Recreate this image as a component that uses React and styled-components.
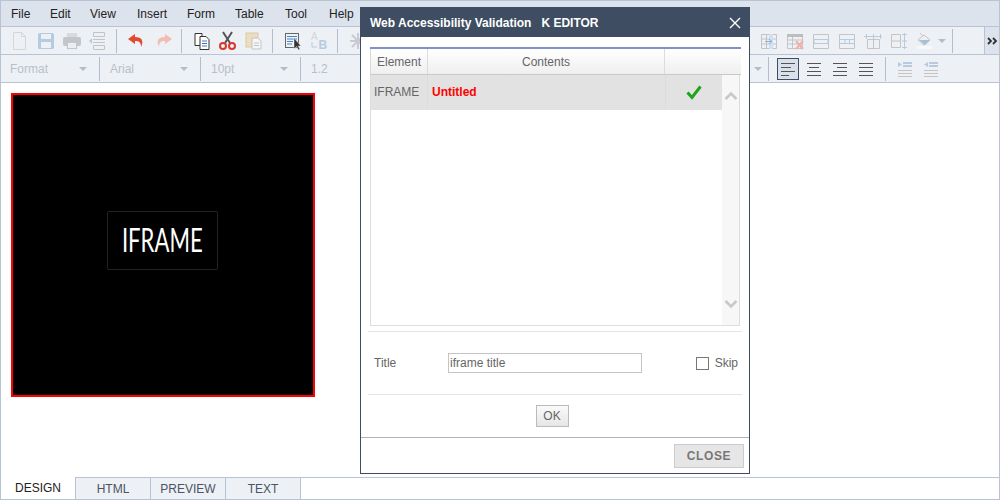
import React from "react";
import styled, { createGlobalStyle } from "styled-components";

const GlobalStyle = createGlobalStyle`
  html, body { margin: 0; padding: 0; background: #fff; }
  body { font-family: "Liberation Sans", Arial, sans-serif; font-size: 12px; }
  * { box-sizing: border-box; }
`;

const Editor = styled.div`
  position: relative;
  width: 1000px;
  height: 500px;
  display: flex;
  flex-direction: column;
  border: 1px solid #b8c3d4;
  overflow: hidden;
`;

const MenuBar = styled.div`
  height: 26px;
  flex: none;
  display: flex;
  align-items: center;
  padding-left: 10px;
  background: #dce3ec;
  border-bottom: 1px solid #b8c3d4;
  color: #222;
`;

const MenuItem = styled.span`
  width: ${(p) => p.$w}px;
`;

const ToolRow = styled.div`
  height: 28px;
  flex: none;
  display: flex;
  align-items: center;
  justify-content: space-between;
  background: #edf0f5;
  border-bottom: 1px solid #b8c3d4;
`;

const ToolGroup = styled.div`
  display: flex;
  align-items: center;
  height: 100%;
  padding-left: ${(p) => p.$pad || 0}px;
`;

const Sep = styled.span`
  width: 1px;
  height: 24px;
  flex: none;
  background: #b4bdcb;
  margin: 0 ${(p) => p.$r ?? 7}px 0 ${(p) => p.$l ?? 5}px;
`;

const IconBtn = styled.span`
  width: 26px;
  height: 22px;
  display: flex;
  align-items: center;
  justify-content: center;
  flex: none;
  ${(p) => p.$active && "background: #d8e0ea; border: 1px solid #3e4d61; width: 22px; margin-right: 2px;"}
`;

const MoreTab = styled.div`
  width: 15px;
  height: 100%;
  display: flex;
  align-items: center;
  justify-content: center;
  background: #dce3ec;
  border-left: 1px solid #b8c3d4;
  margin-left: 25px;
`;

const RowEnd = styled.span`
  width: 55px;
`;

const Select = styled.div`
  width: ${(p) => p.$w}px;
  display: flex;
  align-items: center;
  justify-content: space-between;
  color: #b9bfc8;
  padding-right: 2px;
`;

const Caret = styled.span`
  width: 0;
  height: 0;
  border-left: 4px solid transparent;
  border-right: 4px solid transparent;
  border-top: 4px solid #b4bcc8;
  flex: none;
`;

const Canvas = styled.div`
  flex: 1;
  padding: 10px;
  background: #fff;
`;

const FramePlaceholder = styled.div`
  width: 304px;
  height: 304px;
  padding-bottom: 9px;
  background: #000;
  border: 2px solid #f00;
  display: flex;
  align-items: center;
  justify-content: center;
`;

const FrameLabel = styled.div`
  width: 111px;
  height: 59px;
  margin-right: 1px;
  padding-bottom: 3px;
  border: 1px solid #222;
  border-radius: 2px;
  display: flex;
  align-items: center;
  justify-content: center;
  color: #fff;
  font: 400 33px Lato, sans-serif;
`;

const LabelText = styled.span`
  display: inline-block;
  transform: scaleX(0.67);
`;

const TabBar = styled.div`
  height: 22px;
  flex: none;
  display: flex;
  background: #fff;
`;

const Tab = styled.div`
  width: 75px;
  display: flex;
  align-items: center;
  justify-content: center;
  background: ${(p) => (p.$active ? "#fff" : "#edf0f5")};
  color: ${(p) => (p.$active ? "#222" : "#4a5462")};
  border-right: 1px solid #b8c3d4;
  border-top: ${(p) => (p.$active ? "0" : "1px solid #b8c3d4")};
`;

const TabFill = styled.div`
  flex: 1;
  border-top: 1px solid #b8c3d4;
`;

const Dialog = styled.div`
  position: absolute;
  left: 359px;
  top: 6px;
  width: 390px;
  height: 467px;
  background: #fff;
  border: 1px solid #3e4d61;
  display: flex;
  flex-direction: column;
  color: #666;
`;

const DialogHead = styled.div`
  height: 29px;
  flex: none;
  background: #3e4d61;
  color: #fff;
  font-weight: bold;
  display: flex;
  align-items: center;
  justify-content: space-between;
  padding: 1px 8px 0 9px;
`;

const HeadTitle = styled.span`
  white-space: pre;
`;

const DialogBody = styled.div`
  flex: 1;
  padding: 10px 3px 0 6px;
  display: flex;
  flex-direction: column;
`;

const ValidationTable = styled.div`
  margin-left: 3px;
  width: 371px;
  height: 279px;
  border-top: 2px solid #7f94c4;
  display: flex;
  flex-direction: column;
`;

const TableHead = styled.div`
  height: 26px;
  flex: none;
  display: grid;
  grid-template-columns: 57px 237px 76px;
  background: linear-gradient(#fff, #efefef);
  border-bottom: 1px solid #c9c9c9;
  border-left: 1px solid #d8d8d8;
`;

const HeadCell = styled.div`
  display: flex;
  align-items: center;
  justify-content: center;
  border-right: 1px solid #dcdcdc;
  &:last-child { border-right: 0; }
`;

const TableBody = styled.div`
  flex: 1;
  display: flex;
  width: 370px;
  border: 1px solid #ddd;
  border-top: 0;
`;

const Rows = styled.div`
  flex: 1;
`;

const Row = styled.div`
  height: 35px;
  display: grid;
  grid-template-columns: 57px 238px 56px;
  background: #e2e2e2;
`;

const Cell = styled.div`
  display: flex;
  align-items: center;
  justify-content: ${(p) => (p.$center ? "center" : "flex-start")};
  padding: 0 0 2px ${(p) => (p.$center ? 0 : p.$error ? 4 : 3)}px;
  border-right: 1px solid #dcdcdc;
  color: ${(p) => (p.$error ? "#f00" : "inherit")};
  font-weight: ${(p) => (p.$error ? "bold" : "normal")};
  &:last-child { border-right: 0; }
`;

const Scroller = styled.div`
  width: 17px;
  background: #f7f7f7;
  display: flex;
  flex-direction: column;
  justify-content: space-between;
  align-items: center;
  padding: 16px 0 16px;
`;

const Rule = styled.div`
  height: 1px;
  width: 374px;
  flex: none;
  margin: ${(p) => p.$top || 0}px 0 0 1px;
  background: #e4e4e4;
`;

const FieldRow = styled.div`
  height: 62px;
  display: flex;
  align-items: center;
  padding: 0 8px 0 7px;
`;

const FieldLabel = styled.label`
  width: 74px;
`;

const TextInput = styled.input`
  width: 194px;
  height: 20px;
  border: 1px solid #c4c4c4;
  padding: 0 1px;
  font: 12px "Liberation Sans", sans-serif;
  color: #666;
  outline: 0;
`;

const SkipLabel = styled.label`
  margin-left: auto;
  display: flex;
  align-items: center;
  gap: 6px;
`;

const CheckBox = styled.span`
  width: 13px;
  height: 13px;
  border: 1px solid #777;
  background: #fff;
`;

const OkWrap = styled.div`
  display: flex;
  justify-content: center;
  padding: 10px 9px 0 0;
`;

const OkButton = styled.button`
  width: 33px;
  height: 22px;
  padding: 0;
  border: 1px solid #bbb;
  background: linear-gradient(#fafafa, #e6e6e6);
  color: #666;
  font: 12px "Liberation Sans", sans-serif;
`;

const DialogFoot = styled.div`
  height: 36px;
  flex: none;
  border-top: 1px solid #adb3be;
  display: flex;
  justify-content: flex-end;
  align-items: center;
  padding: 0 5px 0 0;
`;

const CloseButton = styled.button`
  width: 70px;
  height: 24px;
  padding: 0;
  border: 1px solid #ccc;
  background: #e6e6e6;
  color: #777;
  font: bold 12px "Liberation Sans", sans-serif;
  letter-spacing: 0.6px;
`;

const Svg = ({ children, w = 20, h = 20 }) => (
  <svg width={w} height={h} viewBox={`0 0 ${w} ${h}`} fill="none">
    {children}
  </svg>
);

const grey = "#c4c4c4";
const blue = "#b7cbe0";

const icons = {
  doc: <path d="M3.5 1.5h8l4 4v13h-12zM11.5 1.5v4h4" stroke="#d4d6da" />,
  save: (
    <g>
      <rect x="2" y="2" width="16" height="16" rx="1.5" fill={blue} />
      <rect x="5" y="3" width="10" height="5" fill="#edf0f5" />
      <rect x="5" y="11" width="10" height="6" fill="#edf0f5" />
    </g>
  ),
  print: (
    <g>
      <rect x="5" y="2" width="10" height="5" fill="#d8dade" />
      <rect x="1" y="6" width="18" height="9" rx="2" fill="#c2c5ca" />
      <rect x="5.5" y="11.5" width="9" height="6" fill="#eceef2" stroke="#c2c5ca" />
    </g>
  ),
  preview: (
    <g stroke={grey}>
      <path d="M5.5 1.5h11v4h-11zM5.5 14.5h11v4h-11zM5 8.5h12M5 11.5h12" />
      <path d="M1 10l3-3v6z" fill={blue} stroke="none" />
    </g>
  ),
  undo: <path d="M8 3L1 8l7 5v-3c4 0 6 1 6 6 3-6 1-10-6-10z" fill="#e2492f" />,
  redo: <path d="M12 3l7 5-7 5v-3c-4 0-6 1-6 6-3-6-1-10 6-10z" fill="#f1bdb3" />,
  copy: (
    <g stroke="#333">
      <path d="M3 2.5h7v12H3z" fill="#fff" />
      <path d="M8 5.5h6l3 3v10H8z" fill="#fff" />
      <path d="M10 10h5M10 12.5h5M10 15h5" stroke="#3f7cc0" />
    </g>
  ),
  cut: (
    <g>
      <path d="M5 1l7 11M14 1L7 12" stroke="#555" strokeWidth="2" />
      <circle cx="5" cy="15" r="3" stroke="#d9382a" strokeWidth="2" />
      <circle cx="14" cy="15" r="3" stroke="#d9382a" strokeWidth="2" />
    </g>
  ),
  paste: (
    <g>
      <rect x="2" y="2" width="12" height="14" fill="#ecdcc0" stroke="#dcc8a4" />
      <path d="M8 7h6l3 3v8H8z" fill="#f4f5f7" stroke={grey} />
      <path d="M10 12h5M10 14.5h5" stroke={grey} />
    </g>
  ),
  source: (
    <g>
      <rect x="2.5" y="2.5" width="13" height="14" fill="#eef1f5" stroke="#666" />
      <path d="M4 5.5h10M4 8h10M4 10.5h6M4 13h5" stroke="#4a86c5" />
      <path d="M11 7v11l2.5-2.5 2 3.5 1.5-1-2-3h3z" fill="#333" stroke="#eef1f5" strokeWidth="0.5" />
    </g>
  ),
  replace: (
    <g>
      <text x="2" y="9" fontSize="10" fontFamily="Liberation Sans" fill="#d2d6dc">A</text>
      <text x="9.5" y="18" fontSize="12" fontWeight="bold" fontFamily="Liberation Sans" fill={blue}>B</text>
      <path d="M3 11v5h5" stroke={blue} />
    </g>
  ),
  star: <path d="M10 2v16M2 10h16M4 4l12 12M16 4L4 16" stroke="#c8ccd2" strokeWidth="2" />,
  colInsert: (
    <g stroke={grey}>
      <path d="M2.5 3.5h15v14h-15zM7.5 3.5v14M2.5 8h15M2.5 13h15" />
      <rect x="10" y="3" width="4" height="15" fill="#cfe0f0" stroke="none" />
      <path d="M6 10.5h6M10 8l3 2.5-3 2.5" stroke="#8fb0d2" />
    </g>
  ),
  colDelete: (
    <g>
      <path d="M2.5 3.5h15v14h-15zM7.5 3.5v14M2.5 9h15M2.5 13h15" stroke={grey} />
      <rect x="2" y="3" width="16" height="3" fill="#bdbdbd" />
      <path d="M11 10l7 8M18 10l-7 8" stroke="#f0b0a8" strokeWidth="2" />
    </g>
  ),
  rows: (
    <g stroke={grey}>
      <path d="M2.5 3.5h15v14h-15z" />
      <rect x="3" y="8.5" width="14" height="4" fill="#edf0f5" stroke={blue} />
    </g>
  ),
  cells: (
    <g stroke={grey}>
      <path d="M2.5 3.5h15v14h-15z" />
      <path d="M3 8.5h14M3 12.5h14M8 8.5v4M12.5 8.5v4" stroke={blue} />
    </g>
  ),
  widen: (
    <g>
      <path d="M4.5 8.5h12v9h-12zM10.5 8.5v9" stroke={grey} />
      <path d="M1 5.5h18M3.5 3v5M10.5 3v5M17.5 3v5" stroke={blue} />
    </g>
  ),
  heighten: (
    <g>
      <path d="M2.5 3.5h9v13h-9zM2.5 10h9" stroke={grey} />
      <path d="M15.5 2v16M13 3.5h5M13 16.5h5M13 10h5" stroke={blue} />
    </g>
  ),
  fill: (
    <g>
      <rect x="2" y="15" width="15" height="3" fill="#f7f8fa" />
      <path d="M5 2l3 3M3 9l6-5 6 5-6 5z" stroke={grey} />
      <path d="M4 9h11l-5 5z" fill="#a9bfd6" />
    </g>
  ),
};

const Lines = ({ widths, align = "left" }) => (
  <Svg w={14} h={16}>
    {widths.map((w, i) => {
      const x = align === "center" ? (14 - w) / 2 : align === "right" ? 14 - w : 0;
      return <path key={i} d={`M${x} ${2.5 + i * 4}h${w}`} stroke="#555" />;
    })}
  </Svg>
);

const Indent = ({ flip }) => (
  <Svg w={14} h={18}>
    <path d="M5 3h9M5 6h9" stroke={blue} strokeWidth="2" />
    <path d={flip ? "M4 4.5L0 2v5z" : "M0 4.5L4 2v5z"} fill={blue} />
    <path d="M0 10.5h14M0 13.5h14M0 16.5h14" stroke={grey} />
  </Svg>
);

const Tool = ({ name }) => (
  <IconBtn>
    <Svg>{icons[name]}</Svg>
  </IconBtn>
);

const tabs = ["DESIGN", "HTML", "PREVIEW", "TEXT"];
const menus = [
  ["File", 39],
  ["Edit", 40],
  ["View", 47],
  ["Insert", 50],
  ["Form", 48],
  ["Table", 50],
  ["Tool", 44],
  ["Help", 40],
];

export default function App() {
  return (
    <>
      <GlobalStyle />
      <Editor>
        <MenuBar>
          {menus.map(([m, w]) => (
            <MenuItem key={m} $w={w}>{m}</MenuItem>
          ))}
        </MenuBar>
        <ToolRow>
          <ToolGroup $pad={6}>
            <Tool name="doc" />
            <Tool name="save" />
            <Tool name="print" />
            <Tool name="preview" />
            <Sep />
            <Tool name="undo" />
            <Tool name="redo" />
            <Sep />
            <Tool name="copy" />
            <Tool name="cut" />
            <Tool name="paste" />
            <Sep />
            <Tool name="source" />
            <Tool name="replace" />
            <Sep />
            <Tool name="star" />
          </ToolGroup>
          <ToolGroup>
            <Tool name="colInsert" />
            <Tool name="colDelete" />
            <Tool name="rows" />
            <Tool name="cells" />
            <Tool name="widen" />
            <Tool name="heighten" />
            <Tool name="fill" />
            <Caret />
            <Sep $l={6} $r={6} />
            <MoreTab>
              <Svg w={11} h={8}>
                <path d="M1 1l3 3-3 3M6 1l3 3-3 3" stroke="#333" strokeWidth="1.8" />
              </Svg>
            </MoreTab>
          </ToolGroup>
        </ToolRow>
        <ToolRow>
          <ToolGroup $pad={9}>
            <Select $w={79}>
              Format
              <Caret />
            </Select>
            <Sep $l={10} $r={10} />
            <Select $w={80}>
              Arial
              <Caret />
            </Select>
            <Sep $l={10} $r={10} />
            <Select $w={79}>
              10pt
              <Caret />
            </Select>
            <Sep $l={10} $r={10} />
            <Select $w={50}>1.2</Select>
          </ToolGroup>
          <ToolGroup>
            <Caret />
            <Sep $l={6} $r={8} />
            <IconBtn $active>
              <Lines widths={[14, 10, 14, 8]} />
            </IconBtn>
            <IconBtn>
              <Lines widths={[14, 10, 14, 14]} align="center" />
            </IconBtn>
            <IconBtn>
              <Lines widths={[14, 10, 14, 14]} align="right" />
            </IconBtn>
            <IconBtn>
              <Lines widths={[14, 14, 14, 14]} />
            </IconBtn>
            <Sep $l={6} $r={6} />
            <IconBtn>
              <Indent flip />
            </IconBtn>
            <IconBtn>
              <Indent />
            </IconBtn>
            <RowEnd />
          </ToolGroup>
        </ToolRow>
        <Canvas>
          <FramePlaceholder>
            <FrameLabel>
              <LabelText>IFRAME</LabelText>
            </FrameLabel>
          </FramePlaceholder>
        </Canvas>
        <TabBar>
          {tabs.map((t, i) => (
            <Tab key={t} $active={i === 0}>
              {t}
            </Tab>
          ))}
          <TabFill />
        </TabBar>

        <Dialog>
          <DialogHead>
            <HeadTitle>Web Accessibility Validation   K EDITOR</HeadTitle>
            <Svg w={12} h={12}>
              <path d="M1 1l10 10M11 1L1 11" stroke="#fff" strokeWidth="1.4" />
            </Svg>
          </DialogHead>
          <DialogBody>
            <ValidationTable>
              <TableHead>
                <HeadCell>Element</HeadCell>
                <HeadCell>Contents</HeadCell>
                <HeadCell />
              </TableHead>
              <TableBody>
                <Rows>
                  <Row>
                    <Cell>IFRAME</Cell>
                    <Cell $error>Untitled</Cell>
                    <Cell $center>
                      <Svg w={16} h={16}>
                        <path d="M1.5 8.5l4.5 5 8.5-11" stroke="#1aa51a" strokeWidth="3" />
                      </Svg>
                    </Cell>
                  </Row>
                </Rows>
                <Scroller>
                  <Svg w={14} h={10}>
                    <path d="M1.5 8L7 2.5 12.5 8" stroke="#c8c8c8" strokeWidth="2.6" />
                  </Svg>
                  <Svg w={14} h={10}>
                    <path d="M1.5 2L7 7.5 12.5 2" stroke="#c8c8c8" strokeWidth="2.6" />
                  </Svg>
                </Scroller>
              </TableBody>
            </ValidationTable>
            <Rule $top={5} />
            <FieldRow>
              <FieldLabel>Title</FieldLabel>
              <TextInput defaultValue="iframe title" />
              <SkipLabel>
                <CheckBox />
                Skip
              </SkipLabel>
            </FieldRow>
            <Rule />
            <OkWrap>
              <OkButton>OK</OkButton>
            </OkWrap>
          </DialogBody>
          <DialogFoot>
            <CloseButton>CLOSE</CloseButton>
          </DialogFoot>
        </Dialog>
      </Editor>
    </>
  );
}
